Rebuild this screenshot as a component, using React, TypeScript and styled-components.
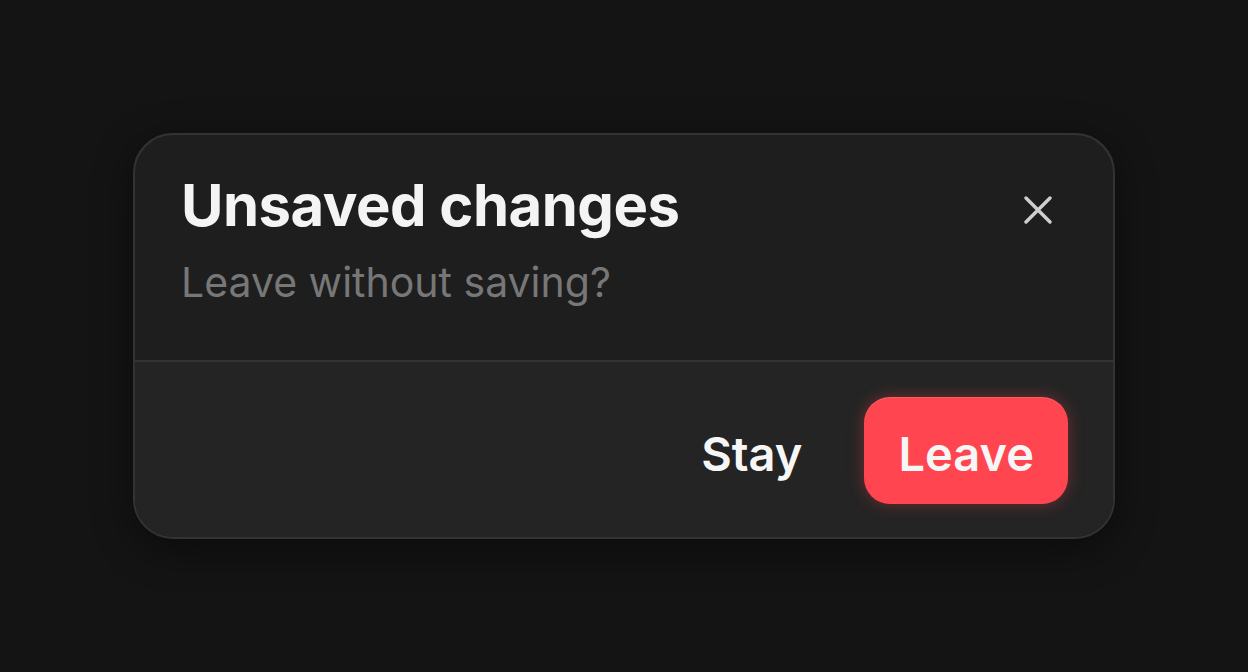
import React from 'react';
import styled, { createGlobalStyle } from 'styled-components';

const Global = createGlobalStyle`
  html, body {
    margin: 0;
    padding: 0;
    background: #141414;
  }
  body {
    font-family: Inter, "Noto Sans", sans-serif;
    -webkit-font-smoothing: antialiased;
  }
`;

const Page = styled.div`
  width: 1248px;
  height: 672px;
  display: flex;
  align-items: center;
  justify-content: center;
  background: #141414;
`;

const Dialog = styled.div`
  width: 982px;
  height: 406px;
  box-sizing: border-box;
  border: 2px solid #333333;
  border-radius: 40px;
  overflow: hidden;
  display: flex;
  flex-direction: column;
  background: #1e1e1e;
  box-shadow: 0 10px 40px rgba(0, 0, 0, 0.45);
`;

const Header = styled.div`
  height: 227px;
  flex-shrink: 0;
  box-sizing: border-box;
  padding: 35px 46px 0 46px;
  display: flex;
  justify-content: space-between;
  align-items: flex-start;
  border-bottom: 2px solid #333333;
`;

const Texts = styled.div`
  display: flex;
  flex-direction: column;
`;

const Title = styled.h2`
  margin: 0;
  font-size: 58px;
  line-height: 70px;
  font-weight: 700;
  letter-spacing: -0.5px;
  color: #f4f4f4;
`;

const Subtitle = styled.p`
  margin: 18px 0 0 0;
  font-size: 41px;
  line-height: 48px;
  font-weight: 400;
  color: #777777;
`;

const CloseButton = styled.button`
  margin-top: 16px;
  margin-right: 5px;
  width: 48px;
  height: 48px;
  padding: 0;
  border: 0;
  background: transparent;
  display: flex;
  align-items: center;
  justify-content: center;
  color: #cfcfcf;
  cursor: pointer;
`;

const Footer = styled.div`
  flex: 1;
  background: #242424;
  display: flex;
  justify-content: flex-end;
  align-items: center;
  gap: 62px;
  padding: 2px 45px 0 0;
`;

const Action = styled.button<{ $danger?: boolean }>`
  border: 0;
  font-family: inherit;
  font-size: 47px;
  font-weight: 600;
  color: #f6f6f6;
  cursor: pointer;
  background: ${p => (p.$danger ? '#ff4550' : 'transparent')};
  height: 107px;
  box-sizing: border-box;
  padding: ${p => (p.$danger ? '6px 34px 0' : '6px 0 0')};
  border-radius: 26px;
  box-shadow: ${p =>
    p.$danger ? '0 0 16px rgba(255, 69, 80, 0.35), inset 0 1px 0 rgba(255,255,255,0.12)' : 'none'};
`;

export default function App() {
  return (
    <Page>
      <Global />
      <Dialog>
        <Header>
          <Texts>
            <Title>Unsaved changes</Title>
            <Subtitle>Leave without saving?</Subtitle>
          </Texts>
          <CloseButton aria-label="Close">
            <svg width="28" height="28" viewBox="0 0 28 28">
              <path d="M2 2 L26 26 M26 2 L2 26" stroke="currentColor" strokeWidth="3.4" strokeLinecap="round" />
            </svg>
          </CloseButton>
        </Header>
        <Footer>
          <Action>Stay</Action>
          <Action $danger>Leave</Action>
        </Footer>
      </Dialog>
    </Page>
  );
}
